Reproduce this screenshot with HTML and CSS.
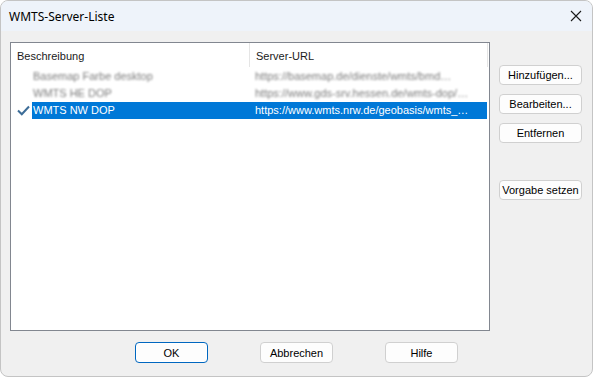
FILE: index.html
```html
<!DOCTYPE html>
<html lang="de">
<head>
    <meta charset="UTF-8">
    <title>WMTS-Server-Liste</title>
    <link rel="stylesheet" href="styles.css">
</head>
<body>
    <div class="window">
        <div class="titlebar">
            <span class="title">WMTS-Server-Liste</span>
            <svg class="close" width="12" height="12" viewBox="0 0 12 12">
                <path d="M1 1 L11 11 M11 1 L1 11" stroke="#1a1a1a" stroke-width="1.1" fill="none"/>
            </svg>
        </div>
        <div class="content">
            <div class="main">
                <div class="list">
                    <div class="list-head">
                        <div class="col col-1">Beschreibung</div>
                        <div class="col col-2">Server-URL</div>
                    </div>
                    <div class="row">
                        <div class="state"></div>
                        <div class="cell cell-1 blur">Basemap Farbe desktop</div>
                        <div class="cell cell-2 blur">https://basemap.de/dienste/wmts/bmd…</div>
                    </div>
                    <div class="row">
                        <div class="state"></div>
                        <div class="cell cell-1 blur">WMTS HE DOP</div>
                        <div class="cell cell-2 blur">https://www.gds-srv.hessen.de/wmts-dop/…</div>
                    </div>
                    <div class="row selected">
                        <div class="state">
                            <svg width="13" height="11" viewBox="0 0 13 11">
                                <path d="M1 5.5 L4.8 9.3 L12 1.5" stroke="#3d6d98" stroke-width="2" fill="none"/>
                            </svg>
                        </div>
                        <div class="cell cell-1">WMTS NW DOP</div>
                        <div class="cell cell-2">https://www.wmts.nrw.de/geobasis/wmts_…</div>
                    </div>
                </div>
                <div class="side">
                    <button class="btn">Hinzufügen...</button>
                    <button class="btn">Bearbeiten...</button>
                    <button class="btn">Entfernen</button>
                    <button class="btn btn-gap">Vorgabe setzen</button>
                </div>
            </div>
            <div class="footer">
                <button class="btn btn-wide btn-default">OK</button>
                <button class="btn btn-wide">Abbrechen</button>
                <button class="btn btn-wide">Hilfe</button>
            </div>
        </div>
    </div>
</body>
</html>
```

FILE: styles.css
```css
html,body{
    margin: 0;
    padding: 0;
}
body{
    font: 11px/1.2 "Liberation Sans", Arial, sans-serif;
    color: #1a1a1a;
    background: #ffffff;
}
.window{
    width: 593px;
    height: 377px;
    box-sizing: border-box;
    border: 1px solid #c4c4c4;
    border-radius: 8px;
    overflow: hidden;
    background: #f0f0f0;
    display: flex;
    flex-direction: column;
}
.titlebar{
    height: 30px;
    flex: none;
    background: #eef3fa;
    display: flex;
    align-items: center;
    justify-content: space-between;
    padding: 0 10px 0 8px;
}
.title{
    font: 12px "Noto Sans", "Open Sans", sans-serif;
    color: #000;
}
.close{
    display: block;
}
.content{
    padding: 11px 0 0 9px;
}
.main{
    display: flex;
}
.list{
    width: 480px;
    height: 289px;
    box-sizing: border-box;
    border: 1px solid #828790;
    background: #ffffff;
}
.list-head{
    display: flex;
    height: 25px;
}
.col{
    box-sizing: border-box;
    padding: 7px 0 0 6px;
    border-right: 1px solid #e5e5e5;
    height: 24px;
    white-space: nowrap;
}
.col-1{
    width: 239px;
}
.col-2{
    width: 238px;
}
.row{
    display: flex;
    height: 17px;
    align-items: center;
}
.state{
    width: 21px;
    height: 17px;
    flex: none;
    display: flex;
    align-items: center;
    justify-content: center;
    padding-left: 3px;
    box-sizing: border-box;
}
.cell{
    height: 17px;
    line-height: 17px;
    white-space: nowrap;
    overflow: hidden;
    box-sizing: border-box;
}
.cell-1{
    width: 218px;
    padding-left: 1px;
}
.cell-2{
    width: 237px;
    padding-left: 5px;
}
.blur{
    color: #7c7c7c;
    filter: blur(1px);
}
.selected .cell{
    background: #0078d7;
    color: #ffffff;
}
.side{
    display: flex;
    flex-direction: column;
    gap: 9px;
    padding: 23px 0 0 9px;
}
.btn{
    font: 11px "Liberation Sans", Arial, sans-serif;
    color: #000;
    width: 83px;
    height: 20px;
    padding: 0;
    box-sizing: border-box;
    border: 1px solid #d0d0d0;
    border-radius: 4px;
    background: #fdfdfd;
    white-space: nowrap;
}
.btn-gap{
    margin-top: 28px;
}
.footer{
    display: flex;
    gap: 52px;
    padding: 11px 0 0 125px;
}
.btn-wide{
    width: 73px;
    height: 21px;
}
.btn-default{
    border: 1px solid #0067c0;
    box-shadow: inset 0 0 0 1px #ffffff;
}
```
